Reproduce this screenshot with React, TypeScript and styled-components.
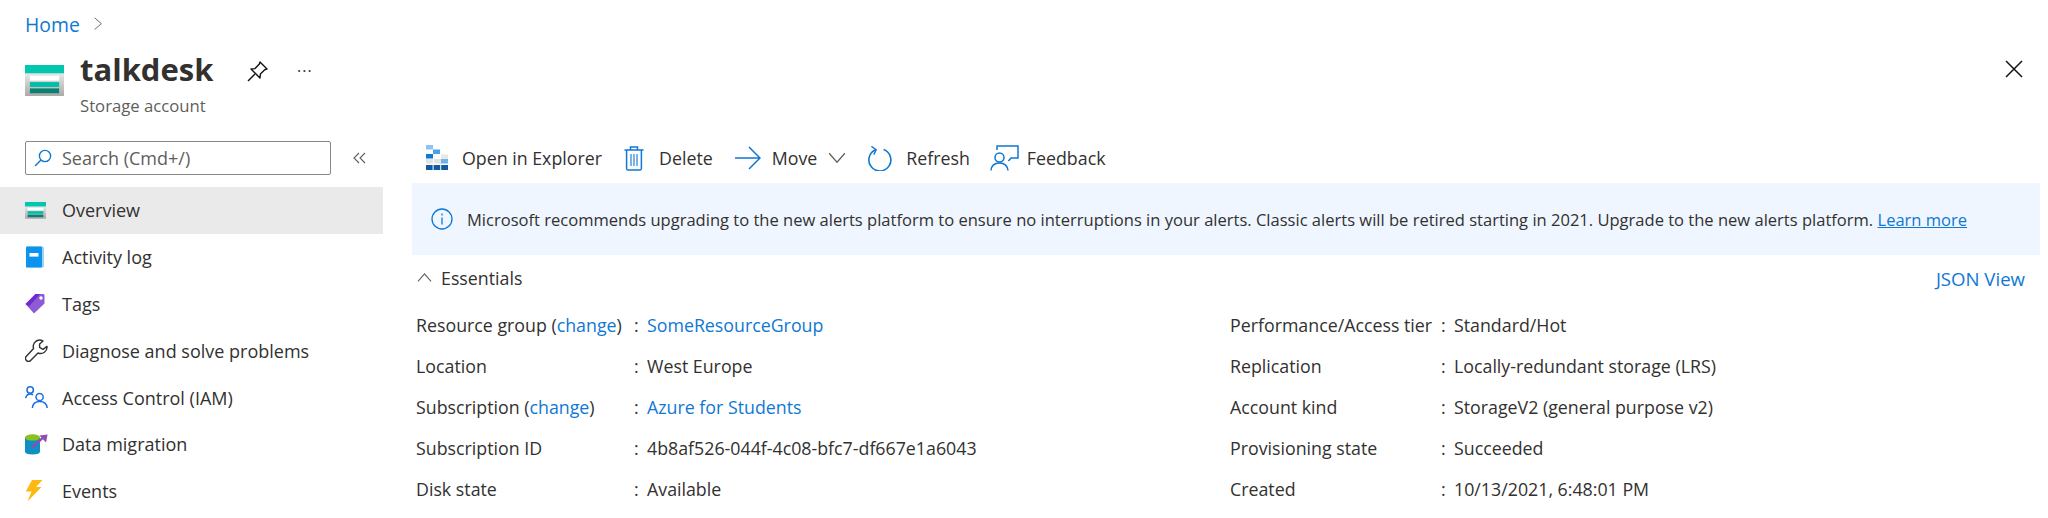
import React from 'react';
import styled, { createGlobalStyle } from 'styled-components';

const GlobalStyle = createGlobalStyle`
    html, body {
        margin: 0;
        padding: 0;
        background: #fff;
        overflow: hidden;
    }
    body {
        font-family: 'Open Sans', 'Noto Sans', sans-serif;
        color: #323130;
    }
`;

const StorageIcon = ({ size }: { size: number }) => (
    <svg width={size} height={size * 0.8} viewBox="0 0 40 32">
        <defs>
            <linearGradient id={`st${size}`} x1="0" y1="0" x2="0" y2="1">
                <stop offset="0" stopColor="#ffffff" />
                <stop offset="1" stopColor="#a9a9a9" />
            </linearGradient>
        </defs>
        <rect x="0" y="0" width="40" height="32" rx="1" fill={`url(#st${size})`} />
        <rect x="0" y="0" width="40" height="8.5" fill="#00c7ae" />
        <rect x="5" y="11" width="30" height="5" fill="#fff" />
        <rect x="5" y="17.5" width="30" height="5" fill="#00bfa8" />
        <rect x="5" y="24" width="30" height="5" fill="#0a7f72" />
    </svg>
);

const BookIcon = () => (
    <svg width="20" height="22" viewBox="0 0 20 22">
        <rect x="1" y="0.5" width="18" height="21" rx="1.5" fill="#9fd3f5" />
        <rect x="1" y="0.5" width="16" height="21" rx="1" fill="#0a94ee" />
        <rect x="4.5" y="7" width="9" height="3.6" fill="#fff" />
    </svg>
);

const TagIcon = () => (
    <svg width="20" height="21" viewBox="0 0 20 21">
        <path d="M0.5 11 L10.5 1 L18.5 1 Q19.5 1 19.5 2.5 L19.5 10.5 L9 20.5 Z" fill="#8f5ad6" />
        <path d="M0.5 11 L10.5 1 L15 1 L4 13.5 Z" fill="#6f2bd0" />
        <circle cx="16" cy="5" r="1.7" fill="#fff" />
    </svg>
);

const WrenchIcon = () => (
    <svg width="23" height="23" viewBox="0 0 23 23" fill="none" stroke="#323130" strokeWidth="1.4" strokeLinejoin="round">
        <path d="M14.5 1 A6.5 6.5 0 0 0 8.6 9.6 L1.4 17.2 A2.9 2.9 0 0 0 5.6 21.4 L13 14 A6.5 6.5 0 0 0 22 7.4 L18 10.4 L14.6 8.4 L14.6 5 L18 2 A6.5 6.5 0 0 0 14.5 1 Z" />
    </svg>
);

const PeopleIcon = () => (
    <svg width="23" height="23" viewBox="0 0 23 23" fill="none" stroke="#1b6fe0" strokeWidth="1.5">
        <circle cx="5.2" cy="4" r="3.2" />
        <path d="M0.6 12.2 Q1.6 8 5.2 8 Q7 8 8 9" />
        <circle cx="14.6" cy="11" r="3.6" />
        <path d="M7.4 22 Q8 15.6 14.6 15.6 Q21.4 15.6 22.2 22" />
    </svg>
);

const MigrationIcon = () => (
    <svg width="23" height="21" viewBox="0 0 23 21">
        <path d="M0 3 L0 17.5 Q0 20.5 7.5 20.5 Q15 20.5 15 17.5 L15 3 Z" fill="#0f8fc4" />
        <ellipse cx="7.5" cy="3.4" rx="7.5" ry="3.2" fill="#8cc21c" />
        <path d="M7 13.5 L18 3.6" stroke="#8f4fae" strokeWidth="2.4" />
        <path d="M14.4 1.4 L22.6 0.4 L21 8.4 Z" fill="#8f4fae" />
    </svg>
);

const BoltIcon = () => (
    <svg width="18" height="22" viewBox="0 0 18 22">
        <path d="M7 0 L17.5 0 L11 7 L16.5 7 L2.5 21.5 L6.5 11.5 L0.8 11.5 Z" fill="#fdb813" />
    </svg>
);

const ExplorerIcon = () => (
    <svg width="24" height="26" viewBox="0 0 24 26">
        <rect x="1" y="0" width="7" height="4.5" fill="#8fc4f2" />
        <rect x="8" y="4.5" width="7" height="4.5" fill="#4aa0ea" />
        <rect x="1" y="9" width="7" height="4.5" fill="#0f78d4" />
        <rect x="16" y="9.5" width="7" height="4.5" fill="#e8e8e8" />
        <rect x="9" y="14" width="7" height="4.5" fill="#e3e3e3" />
        <rect x="16" y="14" width="7" height="4.5" fill="#6fb2ea" />
        <rect x="1" y="14" width="7" height="4.5" fill="#e3e3e3" />
        <rect x="1" y="20" width="6.6" height="5" fill="#135a9e" />
        <rect x="8.6" y="20" width="6.6" height="5" fill="#135a9e" />
        <rect x="16.2" y="20" width="6.8" height="5" fill="#135a9e" />
    </svg>
);

const TrashIcon = () => (
    <svg width="20" height="25" viewBox="0 0 20 25" fill="none" stroke="#0f78d4" strokeWidth="1.5">
        <path d="M0.5 4 L19.5 4" />
        <path d="M6.5 4 L6.5 1 L13.5 1 L13.5 4" />
        <path d="M2.6 4 L2.6 22.4 Q2.6 24 4.2 24 L15.8 24 Q17.4 24 17.4 22.4 L17.4 4" />
        <path d="M7 8 L7 20 M10 8 L10 20 M13 8 L13 20" strokeWidth="1.1" />
    </svg>
);

const ArrowIcon = () => (
    <svg width="26" height="24" viewBox="0 0 26 24" fill="none" stroke="#0f78d4" strokeWidth="1.5">
        <path d="M0 12 L25 12 M14 1 L25 12 L14 23" />
    </svg>
);

const RefreshIcon = () => (
    <svg width="24" height="25" viewBox="0 0 24 25" fill="none" stroke="#0f78d4" strokeWidth="1.6">
        <path d="M7.6 3.8 A11 11 0 1 0 15.6 3.6" />
        <path d="M3.4 0.4 L8.2 3.8 L5.8 8.6" strokeWidth="1.4" />
    </svg>
);

const FeedbackIcon = () => (
    <svg width="30" height="26" viewBox="0 0 30 26" fill="none" stroke="#0f78d4" strokeWidth="1.5">
        <circle cx="9.5" cy="12.5" r="4.5" />
        <path d="M1 25.5 Q1.6 18 9.5 18 Q17 18 18 25.5" />
        <path d="M7 5 L7 1 L28 1 L28 13 L21 13 L18.4 16" />
    </svg>
);

const Chevron = ({ dir, w, color }: { dir: 'up' | 'down' | 'right'; w: number; color: string }) => {
    const d = { up: 'M1 10 L8 2 L15 10', down: 'M1 2 L8 10 L15 2', right: 'M2 1 L10 8 L2 15' }[dir];
    const vb = dir === 'right' ? '0 0 12 16' : '0 0 16 12';
    return (
        <svg width={w} viewBox={vb} fill="none" stroke={color} strokeWidth="1.1">
            <path d={d} />
        </svg>
    );
};

const Page = styled.div`
    width: 2048px;
    height: 518px;
    overflow: hidden;
    background: #fff;
    font-size: 17.8px;
    display: flex;
    flex-direction: column;
`;

const Breadcrumb = styled.div`
    display: flex;
    align-items: center;
    gap: 13px;
    height: 24px;
    padding: 12px 0 0 25px;
`;

const BreadcrumbLink = styled.a`
    color: #0f78d4;
    font-size: 19.4px;
`;

const Header = styled.header`
    display: flex;
    align-items: flex-start;
    padding: 13px 25px 0 25px;
    height: 92px;
    position: relative;
`;

const HeaderLogo = styled.div`
    padding-top: 16px;
    margin-right: 16px;
    line-height: 0;
`;

const HeaderText = styled.div`
    display: flex;
    flex-direction: column;
    width: 167px;
`;

const Title = styled.h1`
    margin: 0;
    font-size: 31px;
    line-height: 40px;
    font-weight: 700;
    color: #323130;
`;

const Subtitle = styled.div`
    font-size: 16.7px;
    line-height: 24px;
    color: #605e5c;
    margin-top: 5px;
`;

const HeaderActions = styled.div`
    display: flex;
    align-items: center;
    gap: 29px;
    height: 40px;
    padding-top: 2px;
`;

const Dots = styled.span`
    color: #323130;
    font-size: 16px;
    letter-spacing: 1px;
`;

const CloseButton = styled.div`
    margin-left: auto;
    margin-top: 11px;
    line-height: 0;
`;

const Body = styled.div`
    display: grid;
    grid-template-columns: 383px 1fr;
    flex: 1;
`;

const Sidebar = styled.nav`
    display: flex;
    flex-direction: column;
`;

const SearchRow = styled.div`
    display: flex;
    align-items: center;
    padding: 0 0 0 25px;
    gap: 22px;
`;

const SearchBox = styled.div`
    box-sizing: border-box;
    width: 306px;
    height: 34px;
    border: 1px solid #8a8886;
    border-radius: 2px;
    display: flex;
    align-items: center;
    padding-left: 8px;
    gap: 10px;
    color: #605e5c;
    font-size: 18px;
`;

const NavList = styled.div`
    margin-top: 12px;
    display: flex;
    flex-direction: column;
`;

const NavItem = styled.div<{ $active?: boolean }>`
    height: 46.8px;
    display: flex;
    align-items: center;
    background: ${({ $active }) => ($active ? '#ebeaea' : 'transparent')};
    color: #323130;
    font-size: 18px;
`;

const NavIcon = styled.span`
    width: 62px;
    padding-left: 25px;
    box-sizing: border-box;
    display: flex;
    align-items: center;
    line-height: 0;
`;

const Main = styled.main`
    padding-left: 29px;
    padding-right: 8px;
    display: flex;
    flex-direction: column;
`;

const Toolbar = styled.div`
    display: flex;
    align-items: center;
    height: 34px;
`;

const ToolButton = styled.div<{ $gap: number; $ml: number }>`
    display: flex;
    align-items: center;
    gap: ${({ $gap }) => $gap}px;
    margin-left: ${({ $ml }) => $ml}px;
    line-height: 0;
`;

const ToolLabel = styled.span`
    line-height: 24px;
    color: #323130;
    font-size: 17.8px;
`;

const Banner = styled.div`
    margin-top: 8px;
    height: 72px;
    background: #eff6ff;
    display: flex;
    align-items: center;
    padding-left: 19px;
    gap: 14px;
    font-size: 16.55px;
    white-space: nowrap;
`;

const BannerLink = styled.a`
    color: #0f78d4;
    text-decoration: underline;
`;

const EssentialsBar = styled.div`
    margin-top: 11px;
    height: 24px;
    display: flex;
    align-items: center;
    padding-left: 5px;
    gap: 9px;
    padding-right: 15px;
`;

const Link = styled.a`
    color: #0f78d4;
`;

const JsonLink = styled(Link)`
    margin-left: auto;
    font-size: 18.6px;
`;

const Essentials = styled.div`
    display: grid;
    grid-template-columns: 814px 1fr;
    margin-top: 14px;
    padding-left: 4px;
`;

const EssentialsColumn = styled.div`
    display: flex;
    flex-direction: column;
`;

const Row = styled.div<{ $label: number }>`
    display: grid;
    grid-template-columns: ${({ $label }) => $label}px 13px 1fr;
    height: 41px;
    align-items: center;
    white-space: nowrap;
`;

type Prop = { label: React.ReactNode; value: React.ReactNode };

const leftRows: Prop[] = [
    {
        label: (
            <>
                Resource group (<Link>change</Link>)
            </>
        ),
        value: <Link>SomeResourceGroup</Link>,
    },
    { label: 'Location', value: 'West Europe' },
    {
        label: (
            <>
                Subscription (<Link>change</Link>)
            </>
        ),
        value: <Link>Azure for Students</Link>,
    },
    { label: 'Subscription ID', value: '4b8af526-044f-4c08-bfc7-df667e1a6043' },
    { label: 'Disk state', value: 'Available' },
];

const rightRows: Prop[] = [
    { label: 'Performance/Access tier', value: 'Standard/Hot' },
    { label: 'Replication', value: 'Locally-redundant storage (LRS)' },
    { label: 'Account kind', value: 'StorageV2 (general purpose v2)' },
    { label: 'Provisioning state', value: 'Succeeded' },
    { label: 'Created', value: '10/13/2021, 6:48:01 PM' },
];

const navItems: { label: string; icon: React.ReactNode; active?: boolean }[] = [
    { label: 'Overview', icon: <StorageIcon size={21} />, active: true },
    { label: 'Activity log', icon: <BookIcon /> },
    { label: 'Tags', icon: <TagIcon /> },
    { label: 'Diagnose and solve problems', icon: <WrenchIcon /> },
    { label: 'Access Control (IAM)', icon: <PeopleIcon /> },
    { label: 'Data migration', icon: <MigrationIcon /> },
    { label: 'Events', icon: <BoltIcon /> },
];

const App = () => (
    <Page>
        <GlobalStyle />
        <Breadcrumb>
            <BreadcrumbLink>Home</BreadcrumbLink>
            <Chevron dir="right" w={10} color="#605e5c" />
        </Breadcrumb>
        <Header>
            <HeaderLogo>
                <StorageIcon size={39} />
            </HeaderLogo>
            <HeaderText>
                <Title>talkdesk</Title>
                <Subtitle>Storage account</Subtitle>
            </HeaderText>
            <HeaderActions>
                <svg width="21" height="21" viewBox="0 0 21 21" fill="none" stroke="#111" strokeWidth="1.4" strokeLinejoin="round">
                    <path d="M13 1 L20 8 L18 8.6 L13.4 13 L13 17 L4 8 L8 7.6 L12.4 3 Z" />
                    <path d="M8 13 L1 20" />
                </svg>
                <Dots>···</Dots>
            </HeaderActions>
            <CloseButton>
                <svg width="18" height="18" viewBox="0 0 18 18" stroke="#111" strokeWidth="1.5">
                    <path d="M1 1 L17 17 M17 1 L1 17" />
                </svg>
            </CloseButton>
        </Header>
        <Body>
            <Sidebar>
                <SearchRow>
                    <SearchBox>
                        <svg width="18" height="18" viewBox="0 0 18 18" fill="none" stroke="#0f78d4" strokeWidth="1.4">
                            <circle cx="11" cy="7" r="5.6" />
                            <path d="M7 11 L1 17" />
                        </svg>
                        <span>Search (Cmd+/)</span>
                    </SearchBox>
                    <svg width="13" height="12" viewBox="0 0 13 12" fill="none" stroke="#605e5c" strokeWidth="1.1">
                        <path d="M6 1 L1 6 L6 11 M12 1 L7 6 L12 11" />
                    </svg>
                </SearchRow>
                <NavList>
                    {navItems.map((item) => (
                        <NavItem key={item.label} $active={item.active}>
                            <NavIcon>{item.icon}</NavIcon>
                            {item.label}
                        </NavItem>
                    ))}
                </NavList>
            </Sidebar>
            <Main>
                <Toolbar>
                    <ToolButton $gap={13} $ml={13}>
                        <ExplorerIcon />
                        <ToolLabel>Open in Explorer</ToolLabel>
                    </ToolButton>
                    <ToolButton $gap={15} $ml={22}>
                        <TrashIcon />
                        <ToolLabel>Delete</ToolLabel>
                    </ToolButton>
                    <ToolButton $gap={11} $ml={22}>
                        <ArrowIcon />
                        <ToolLabel>Move</ToolLabel>
                        <Chevron dir="down" w={18} color="#605e5c" />
                    </ToolButton>
                    <ToolButton $gap={14} $ml={22}>
                        <RefreshIcon />
                        <ToolLabel>Refresh</ToolLabel>
                    </ToolButton>
                    <ToolButton $gap={7} $ml={20}>
                        <FeedbackIcon />
                        <ToolLabel>Feedback</ToolLabel>
                    </ToolButton>
                </Toolbar>
                <Banner>
                    <svg width="22" height="22" viewBox="0 0 22 22" fill="none" stroke="#0f78d4" strokeWidth="1.3">
                        <circle cx="11" cy="11" r="10" />
                        <path d="M11 9.5 L11 16.5 M11 5.6 L11 7.4" />
                    </svg>
                    <span>
                        Microsoft recommends upgrading to the new alerts platform to ensure no interruptions in your alerts. Classic alerts will be retired starting in 2021. Upgrade to the new alerts platform. <BannerLink>Learn more</BannerLink>
                    </span>
                </Banner>
                <EssentialsBar>
                    <Chevron dir="up" w={15} color="#605e5c" />
                    <span>Essentials</span>
                    <JsonLink>JSON View</JsonLink>
                </EssentialsBar>
                <Essentials>
                    <EssentialsColumn>
                        {leftRows.map((r, i) => (
                            <Row key={i} $label={218}>
                                <span>{r.label}</span>
                                <span>:</span>
                                <span>{r.value}</span>
                            </Row>
                        ))}
                    </EssentialsColumn>
                    <EssentialsColumn>
                        {rightRows.map((r, i) => (
                            <Row key={i} $label={211}>
                                <span>{r.label}</span>
                                <span>:</span>
                                <span>{r.value}</span>
                            </Row>
                        ))}
                    </EssentialsColumn>
                </Essentials>
            </Main>
        </Body>
    </Page>
);

export default App;
